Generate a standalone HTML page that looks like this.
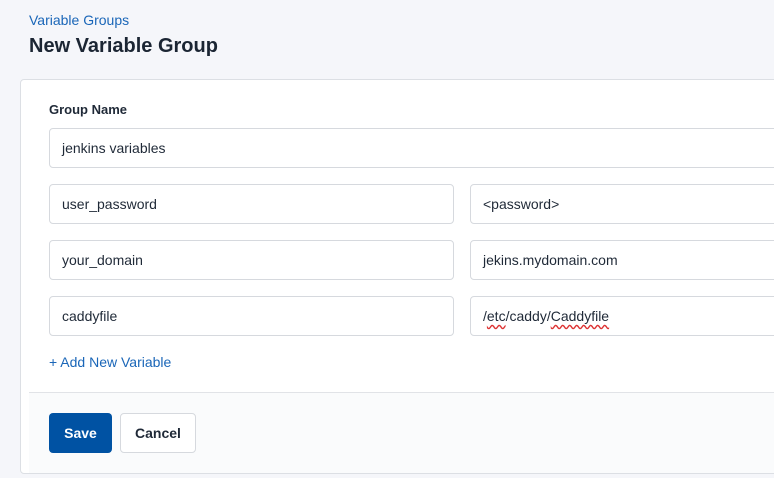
<!DOCTYPE html>
<html><head><style>
*{box-sizing:border-box;margin:0;padding:0}
body{width:774px;height:478px;overflow:hidden;background:#f5f6fa;font-family:"Liberation Sans",sans-serif;position:relative;color:#1f2937}
.a{position:absolute}
.crumb{left:29px;top:12px;font-size:14px;color:#1a66b8}
h1{position:absolute;left:29px;top:35px;font-size:20px;font-weight:bold;color:#1b2533}
.card{left:20px;top:79px;width:780px;height:395px;background:#fff;border:1px solid #dcdfe4;border-radius:4px;overflow:hidden}
.foot{left:0;top:312px;width:100%;height:90px;background:#fafbfc;border-top:1px solid #e1e3e7;margin-left:8px}
.lbl{left:49px;top:102px;font-size:13px;font-weight:bold;color:#1f2937}
.in{position:absolute;height:40px;border:1px solid #d6d9de;border-radius:4px;background:#fff;font-size:14px;padding:0 12px;line-height:38px;color:#1f2937}
.add{left:49px;top:354px;font-size:14px;color:#1a66b8}
.btn{position:absolute;top:413px;height:40px;border-radius:4px;font-size:14px;font-weight:bold;line-height:40px;text-align:center}
u{text-decoration:underline wavy #d33;text-underline-offset:3px}
</style></head><body>
<div class="a crumb">Variable Groups</div>
<h1>New Variable Group</h1>
<div class="a card"><div class="a foot"></div></div>
<div class="a lbl">Group Name</div>
<div class="in" style="left:49px;top:128px;width:760px">jenkins variables</div>
<div class="in" style="left:49px;top:184px;width:405px">user_password</div>
<div class="in" style="left:470px;top:184px;width:340px">&lt;password&gt;</div>
<div class="in" style="left:49px;top:240px;width:405px">your_domain</div>
<div class="in" style="left:470px;top:240px;width:340px">jekins.mydomain.com</div>
<div class="in" style="left:49px;top:296px;width:405px">caddyfile</div>
<div class="in" style="left:470px;top:296px;width:340px">/<u>etc</u>/caddy/<u>Caddyfile</u></div>
<div class="a add">+ Add New Variable</div>
<div class="btn" style="left:49px;width:63px;background:#0052a3;color:#fff">Save</div>
<div class="btn" style="left:120px;width:76px;background:#fff;border:1px solid #d6d9de;color:#1f2937;line-height:38px">Cancel</div>
</body></html>
